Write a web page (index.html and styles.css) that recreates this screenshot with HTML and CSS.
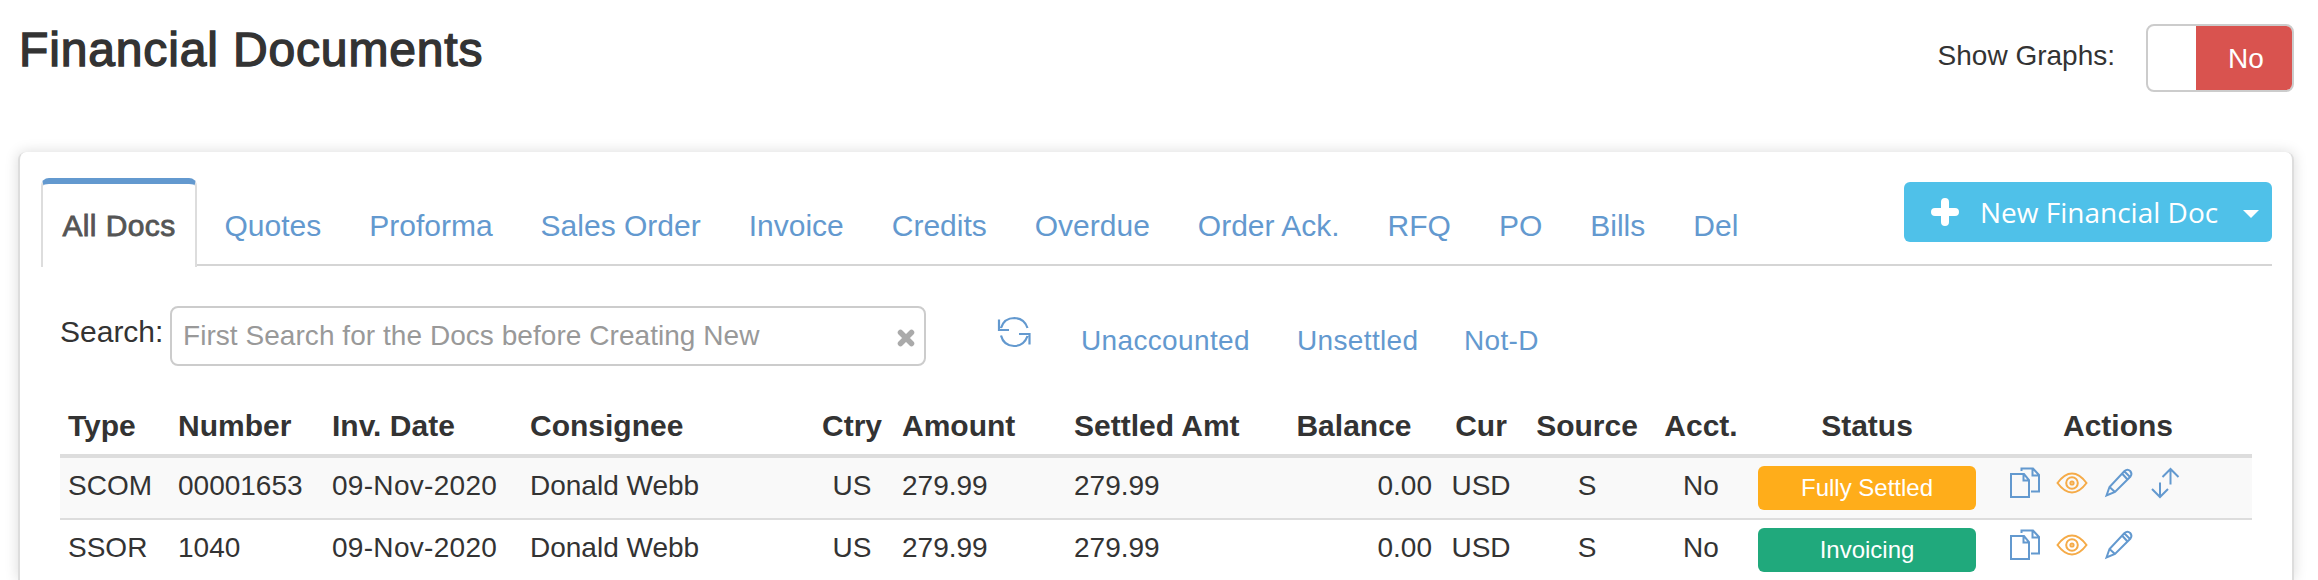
FILE: index.html
```html
<!DOCTYPE html>
<html lang="en">
<head>
<meta charset="utf-8">
<title>Financial Documents</title>
<link rel="stylesheet" href="styles.css">
</head>
<body>
<svg class="defs" width="0" height="0" aria-hidden="true">
  <symbol id="copy" viewBox="0 0 32 32">
    <path d="M2 7H15L20 13V30H2ZM14.500 7V13.500H20M12.500 4V1.500H24L30 8V24.500H22M23.500 1.500V8.500H30"/>
  </symbol>
  <symbol id="eye" viewBox="0 0 32 32">
    <path d="M1.500 16Q8.500 6.500 16 6.500T30.500 16Q23.500 25.500 16 25.500T1.500 16Z"/>
    <circle cx="16" cy="16" r="5.800"/><circle cx="16" cy="16" r="1.600"/>
  </symbol>
  <symbol id="pencil" viewBox="0 0 32 32">
    <path d="M3.500 28.500L6.500 20L21.500 4Q24.500 1.500 27.200 4Q29.500 6.800 27.500 9.500L12 25Z M6.500 20L12 25M19 6.500L24.500 12.500M21.500 4.500L27 10"/>
  </symbol>
  <symbol id="swap" viewBox="0 0 32 32">
    <path d="M10 15.500V30M2 22L10 30L18 22M20.500 17.500V2M12.500 10L20.500 2L28.500 10"/>
  </symbol>
</svg>
<header class="page-head">
  <h1 class="title">Financial Documents</h1>
  <div class="graphs">
    <span class="graphs-label">Show Graphs:</span>
    <div class="toggle"><span class="toggle-no">No</span></div>
  </div>
</header>
<main class="card">
  <nav class="tabs">
    <div class="tab-list">
      <a class="tab active">All Docs</a>
      <a class="tab">Quotes</a><a class="tab">Proforma</a><a class="tab">Sales Order</a><a class="tab">Invoice</a><a class="tab">Credits</a><a class="tab">Overdue</a><a class="tab">Order Ack.</a><a class="tab">RFQ</a><a class="tab">PO</a><a class="tab">Bills</a><a class="tab">Del</a>
    </div>
    <button class="new-doc">
      <svg class="plus" width="30" height="30" viewBox="0 0 30 30"><path d="M15 5V25M5 15H25"/></svg>
      <span class="new-label">New Financial Doc</span>
      <span class="caret"></span>
    </button>
  </nav>
  <section class="filters">
    <span class="search-label">Search:</span>
    <div class="search-box">
      <span class="placeholder">First Search for the Docs before Creating New</span>
      <svg class="clear" width="18" height="18" viewBox="0 0 18 18"><path d="M3.500 3.500L14.500 14.500M14.500 3.500L3.500 14.500"/></svg>
    </div>
    <svg class="refresh" width="34" height="34" viewBox="0 0 34 34"><path d="M2 4.500V15H12M4 13Q7 3 17.500 3Q27.500 3.500 30.500 13M32.500 29.500V19H22M30.500 21Q27 31 17 31Q6.500 30.500 4 20.500"/></svg>
    <a class="filter unaccounted">Unaccounted</a><a class="filter unsettled">Unsettled</a><a class="filter">Not-D</a>
  </section>
  <table class="docs">
    <colgroup><col class="c-type"><col class="c-number"><col class="c-date"><col class="c-consignee"><col class="c-ctry"><col class="c-amount"><col class="c-settled"><col class="c-balance"><col class="c-cur"><col class="c-source"><col class="c-acct"><col class="c-status"><col class="c-actions"></colgroup>
    <thead>
      <tr><th>Type</th><th>Number</th><th>Inv. Date</th><th>Consignee</th><th class="mid">Ctry</th><th>Amount</th><th>Settled Amt</th><th class="mid">Balance</th><th class="mid">Cur</th><th class="mid">Source</th><th class="mid">Acct.</th><th class="mid">Status</th><th class="mid">Actions</th></tr>
    </thead>
    <tbody>
      <tr class="odd"><td>SCOM</td><td>00001653</td><td class="date">09-Nov-2020</td><td>Donald Webb</td><td class="mid">US</td><td>279.99</td><td>279.99</td><td class="num">0.00</td><td class="mid">USD</td><td class="mid">S</td><td class="mid">No</td>
        <td class="status"><span class="badge settled">Fully Settled</span></td>
        <td class="actions"><div class="icons"><svg class="icon"><use href="#copy"/></svg><svg class="icon view"><use href="#eye"/></svg><svg class="icon"><use href="#pencil"/></svg><svg class="icon"><use href="#swap"/></svg></div></td></tr>
      <tr><td>SSOR</td><td>1040</td><td class="date">09-Nov-2020</td><td>Donald Webb</td><td class="mid">US</td><td>279.99</td><td>279.99</td><td class="num">0.00</td><td class="mid">USD</td><td class="mid">S</td><td class="mid">No</td>
        <td class="status"><span class="badge invoicing">Invoicing</span></td>
        <td class="actions"><div class="icons"><svg class="icon"><use href="#copy"/></svg><svg class="icon view"><use href="#eye"/></svg><svg class="icon"><use href="#pencil"/></svg></div></td></tr>
    </tbody>
  </table>
</main>
</body>
</html>
```
FILE: styles.css
```css
* { box-sizing: border-box; }
html { overflow: hidden; }
body {
  margin: 0;
  height: 580px;
  overflow: hidden;
  background: #fff;
  color: #333;
  font: 28px/40px "Liberation Sans", Arial, sans-serif;
}
.defs { display: block; height: 0; }
svg { fill: none; stroke: currentColor; flex: none; }

.page-head {
  display: flex;
  justify-content: space-between;
  height: 152px;
  padding: 22px 24px 0 19px;
}
.title {
  margin: 0;
  font-size: 48px;
  line-height: 56px;
  font-weight: 400;
  letter-spacing: .85px;
  -webkit-text-stroke: 1.4px #333;
}
.graphs { display: flex; align-items: flex-start; padding-top: 2px; }
.graphs-label { margin-top: 12px; margin-right: 31px; }
.toggle {
  width: 148px;
  height: 68px;
  padding-left: 48px;
  border: 2px solid #ccc;
  border-radius: 8px;
  overflow: hidden;
}
.toggle-no {
  display: block;
  height: 64px;
  padding-left: 4px;
  line-height: 66px;
  text-align: center;
  color: #fff;
  background: #d9534f;
}

.card {
  width: 2276px;
  height: 428px;
  margin-left: 18px;
  padding: 26px 20px 0 21px;
  border: solid #ddd;
  border-width: 0 2px;
  border-radius: 8px 8px 0 0;
  background: #fff;
  box-shadow: 0 0 14px rgba(0, 0, 0, .15);
}
.tabs {
  display: flex;
  justify-content: space-between;
  height: 88px;
  border-bottom: 2px solid #d5d5d5;
}
.tab-list { display: flex; gap: 48px; }
.tab { padding-top: 28px; color: #6399cf; font-size: 30px; white-space: nowrap; }
.tab.active {
  width: 156px;
  height: 89px;
  margin-right: -20.500px;
  padding-top: 22px;
  text-align: center;
  letter-spacing: .4px;
  color: #555;
  background: #fff;
  border: 2px solid #ddd;
  border-top: 6px solid #6399cf;
  border-bottom: 0;
  border-radius: 8px 8px 0 0;
  -webkit-text-stroke: .8px #555;
}
.new-doc {
  display: flex;
  align-items: center;
  width: 368px;
  height: 60px;
  margin-top: 4px;
  padding: 0 13px 0 26px;
  border: 0;
  border-radius: 6px;
  color: #fff;
  background: #4fc1e9;
  font: 28px/40px "Open Sans", sans-serif;
}
.plus { stroke-width: 8; stroke-linejoin: round; stroke-linecap: round; }
.new-label { margin-left: 20px; margin-top: -1px; white-space: nowrap; }
.caret {
  margin-left: auto;
  margin-top: 4px;
  border: 8px solid transparent;
  border-top-color: #fff;
  border-bottom: 0;
}

.filters {
  display: flex;
  align-items: flex-start;
  height: 134px;
  padding: 40px 0 0 19px;
}
.search-label { width: 110px; margin-top: 6px; font-size: 30px; }
.search-box {
  display: flex;
  align-items: center;
  justify-content: space-between;
  width: 756px;
  height: 60px;
  padding: 0 9px 0 11px;
  border: 2px solid #ccc;
  border-radius: 8px;
}
.placeholder { color: #999; letter-spacing: .05px; white-space: nowrap; }
.clear { margin-top: 3px; color: #aaa; stroke-width: 5.500; stroke-linecap: round; }
.refresh { margin: 9px 0 0 71px; color: #6399cf; stroke-width: 2.200; }
.filter { margin-top: 15px; color: #6399cf; letter-spacing: .35px; }
.unaccounted { width: 216px; margin-left: 50px; }
.unsettled { width: 167px; }

.docs {
  width: 2192px;
  margin-left: 19px;
  table-layout: fixed;
  border-collapse: separate;
  border-spacing: 0;
}
.c-type { width: 110px; }
.c-number { width: 154px; }
.c-date { width: 198px; }
.c-consignee { width: 288px; }
.c-ctry { width: 84px; }
.c-amount { width: 172px; }
.c-settled { width: 202px; }
.c-balance { width: 172px; }
.c-cur { width: 82px; }
.c-source { width: 130px; }
.c-acct { width: 98px; }
.c-status { width: 234px; }
.c-actions { width: 268px; }
.docs th {
  height: 58px;
  padding: 6px 8px 8px;
  text-align: left;
  font-size: 30px;
  white-space: nowrap;
  border-bottom: 4px solid #ddd;
}
.docs td {
  height: 62px;
  padding: 8px;
  vertical-align: top;
  white-space: nowrap;
  border-bottom: 2px solid #ddd;
}
.docs .mid { text-align: center; }
.docs .num { text-align: right; }
.date { letter-spacing: .3px; }
.odd td { background: #f9f9f9; }
.badge {
  display: block;
  width: 218px;
  height: 44px;
  line-height: 44px;
  text-align: center;
  color: #fff;
  font-size: 24px;
  border-radius: 6px;
}
.settled { background: #ffad1a; }
.invoicing { background: #20a97c; }
.docs .actions { padding-left: 25px; }
.icons { display: flex; gap: 15px; padding-top: 1px; }
.icon { width: 32px; height: 32px; color: #6399cf; stroke-width: 2; }
.view { color: #f5ab48; }
```
